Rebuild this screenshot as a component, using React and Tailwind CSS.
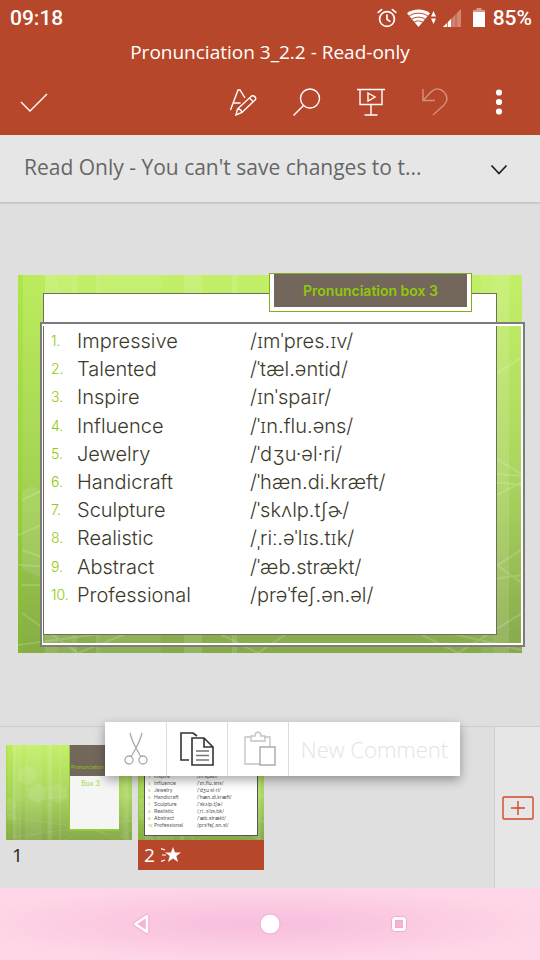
import React from "react";

const words = [
  ["Impressive", "/ɪmˈpres.ɪv/"],
  ["Talented", "/ˈtæl.əntid/"],
  ["Inspire", "/ɪnˈspaɪr/"],
  ["Influence", "/ˈɪn.flu.əns/"],
  ["Jewelry", "/ˈdʒu·əl·ri/"],
  ["Handicraft", "/ˈhæn.di.kræft/"],
  ["Sculpture", "/ˈskʌlp.tʃɚ/"],
  ["Realistic", "/ˌriː.əˈlɪs.tɪk/"],
  ["Abstract", "/ˈæb.strækt/"],
  ["Professional", "/prəˈfeʃ.ən.əl/"],
];

function StatusIcons() {
  return (
    <div className="flex items-center text-white">
      <svg className="mr-2.5 size-5" viewBox="0 0 20 20" fill="none" stroke="currentColor" strokeWidth="1.7" strokeLinecap="round" aria-hidden="true">
        <circle cx="10" cy="11" r="7.4" />
        <path d="M10 7v4.4l2.8 1.8M1.2 4.4 4.6 1.6M18.8 4.4l-3.4-2.8" />
      </svg>
      <svg className="mr-1.5 h-5 w-[30px]" viewBox="0 0 30 20" aria-hidden="true">
        <path d="M0 5.2C6 .2 17 .2 23 5.2L11.500 19Z" fill="white" />
        <path d="M2 8.200c5-4 14-4 19 0M4.500 11.400c4-3 10-3 14 0M7 14.400c2.600-2 6.400-2 9 0" fill="none" stroke="#b7472a" strokeWidth="1" />
        <path d="M24 8.500 26.500 3 29 8.500ZM24 10.500h5L26.500 16Z" fill="white" />
      </svg>
      <svg className="mr-3 h-5 w-[18px]" viewBox="0 0 18 20" aria-hidden="true">
        <path d="M0 19 18 1v18Z" fill="white" opacity=".35" />
        <path d="M0 19 8.500 10.500V19Z" fill="white" />
        <path d="M4.500 12v8M8.800 8v12M13 4v16" stroke="#b7472a" strokeWidth=".7" />
      </svg>
      <svg className="mr-2 h-5 w-3" viewBox="0 0 12 20" fill="white" aria-hidden="true">
        <path d="M3.500 0h5v2H12v3H0V2h3.500Z" opacity=".45" />
        <path d="M0 4h12v15H0Z" />
      </svg>
      <span className="font-[Roboto,sans-serif] text-[21px] leading-6 font-medium">85%</span>
    </div>
  );
}

function ToolButton({ label, dim, children }) {
  return (
    <button type="button" aria-label={label} disabled={dim} className={`flex h-16 w-16 items-center justify-center ${dim ? "text-white/40" : "text-white"}`}>
      <svg className="size-7" viewBox="0 0 28 28" fill="none" stroke="currentColor" strokeWidth="1.4" aria-hidden="true">
        {children}
      </svg>
    </button>
  );
}

function Backdrop({ children, className }) {
  return (
    <div className={`relative bg-linear-to-b from-[#c3f068] via-[#a9d45e] via-55% to-[#87a94b] ${className}`}>
      <svg className="absolute inset-0 h-full w-full" viewBox="0 0 504 378" preserveAspectRatio="none" aria-hidden="true">
        <path d="M0 0h5v378H0Z" fill="#80d000" opacity=".3" />
        <path d="M5 0h22v378H5Z" fill="#80d000" opacity=".1" />
        <g fill="white">
          <path d="M27 0h13v378H27ZM54 0h5v378h-5ZM78 0h4v378h-4ZM176 0h8v378h-8ZM214 0h5v378h-5Z" opacity=".12" />
          <path d="M40 0h14v378H40ZM82 0h61v378H82ZM463 0h12v378h-12Z" opacity=".07" />
          <path d="M475 0h16v378h-16ZM166 0h10v378h-10Z" opacity=".12" />
          <path d="M4 216 14 211 36 223V296L20 302 4 294ZM50 100 86 80 122 100V140L86 160 50 140ZM170 170 206 150 242 170V212L206 232 170 212ZM90 172 126 152 162 172V212L126 232 90 212Z" opacity=".1" />
        </g>
        <g fill="none" stroke="white" strokeWidth="2" opacity=".16">
          <path d="M4 225 36 210M4 275l40 14M4 310h40M4 338l56 40M60 378l100-40M160 338l80 40 60-40M360 338l80 40 64-40M450 117l54-35M450 165l54 35M450 196l54 5M450 235l54-28M450 310l54-36M450 270l54 38M0 260q190-85 504-50M0 290q190 10 504 85M504 300Q300 330 0 370" />
        </g>
      </svg>
      {children}
    </div>
  );
}

function MainSlide() {
  return (
    <Backdrop className="aspect-4/3 w-full">
      <div className="absolute inset-x-[25px] inset-y-[18px] border border-[#6d6d66] bg-white" />
      <div className="absolute -top-0.5 right-[50px] h-[39px] w-[203px] border border-[#7fb01c] bg-white px-1 pb-1">
        <h1 className="flex h-full items-center justify-center bg-[#72675a] font-[Inter,sans-serif] text-[14px] font-semibold text-[#8fc90a]">
          Pronunciation box 3
        </h1>
      </div>
      <div className="absolute -right-[3px] bottom-1.5 left-[22px] top-[47px] border-2 border-[#7c7c7c] font-[Inter,'Noto_Sans',sans-serif]">
        <div className="h-full border-2 border-l border-white pl-2 pt-px">
          <ol className="grid h-[282px] grid-rows-10">
            {words.map(([word, ipa], i) => (
              <li key={word} className="grid grid-cols-[26px_173px_1fr] items-center whitespace-nowrap text-[20px] font-light leading-7 text-[#3b3a2b]">
                <span className="text-[14px] text-[#8fc90a]">{i + 1}.</span>
                <span>{word}</span>
                <span>{ipa}</span>
              </li>
            ))}
          </ol>
        </div>
      </div>
    </Backdrop>
  );
}

function TitleThumb() {
  return (
    <Backdrop className="h-[95px] w-full">
      <div className="absolute right-[13px] top-0 flex h-[86px] w-[50px] flex-col border-b-2 border-l border-[#94c93a] bg-[#f5f5f5] text-center font-[Inter,sans-serif] leading-3 text-[#9bdc3a]">
        <div className="flex h-[31px] items-end justify-start bg-[#72675a] pb-[3px] pl-px text-[5px] text-[#8fc90a]">Pronunciation</div>
        <div className="pr-2 pt-0.5 text-[7px]">Box 3</div>
      </div>
    </Backdrop>
  );
}

function ListThumb() {
  return (
    <Backdrop className="h-[95px] w-full">
      <div className="absolute inset-x-1.5 bottom-1 top-1 border border-[#555] bg-white pl-[3px] pt-[9px]">
        <ol className="font-[Inter,'Noto_Sans',sans-serif]">
          {words.map(([word, ipa], i) => (
            <li key={word} className="grid grid-cols-[6px_43px_1fr] whitespace-nowrap text-[5px] leading-[7px] text-[#555]">
              <span className="text-[4px] text-[#8fc90a]">{i + 1}</span>
              <span>{word}</span>
              <span>{ipa}</span>
            </li>
          ))}
        </ol>
      </div>
    </Backdrop>
  );
}

function ContextMenu() {
  return (
    <div className="absolute -top-[5px] left-[105px] flex h-[54px] w-[355px] divide-x divide-[#ddd] bg-white shadow-[0_4px_10px_rgba(0,0,0,0.35)]">
      <button type="button" aria-label="Cut" className="flex w-[62px] items-center justify-center">
        <svg className="h-9 w-6" viewBox="0 0 24 36" fill="none" stroke="#aaa" strokeWidth="1.3" aria-hidden="true">
          <path d="M6 2c1 5 3 9 5.500 14L17 26M18 2c-1 5-3 9-5.500 14L7 26" />
          <circle cx="5" cy="29" r="4" />
          <circle cx="19" cy="29" r="4" />
        </svg>
      </button>
      <button type="button" aria-label="Copy" className="flex w-[61px] items-center justify-center">
        <svg className="size-9" viewBox="0 0 36 36" fill="none" stroke="#333" strokeWidth="1.6" aria-hidden="true">
          <path d="M10 29H2V2h12l4 3" />
          <path d="M13 7h12l9 9v18H13ZM25 7v9h9" />
          <path d="M17 20h13M17 24.500h13M17 29h13" stroke="#777" />
        </svg>
      </button>
      <button type="button" aria-label="Paste" className="flex w-[61px] items-center justify-center pl-1">
        <svg className="size-9" viewBox="0 0 36 36" fill="none" strokeWidth="1.4" aria-hidden="true">
          <path d="M9 6H3v27h15M22 6h6v10M9 10V5h4c0-5 6-5 6 0h4v5Z" stroke="#c4c4c4" />
          <path d="M18 16h15v18H18Z" stroke="#aaa" />
        </svg>
      </button>
      <button type="button" className="flex-1 whitespace-nowrap text-[22px] font-light text-[#e4e4e4]">New Comment</button>
    </div>
  );
}

export default function App() {
  return (
    <div className="flex min-h-screen flex-col bg-[#dfdfdf] font-['Open_Sans','Noto_Sans',sans-serif]">
      <header className="bg-[#b7472a] text-white">
        <div className="flex h-9 items-center justify-between pl-2.5 pr-2">
          <span className="font-[Roboto,sans-serif] text-[21px] font-medium leading-6">09:18</span>
          <StatusIcons />
        </div>
        <div className="h-8 text-center text-[19px] leading-8">Pronunciation 3_2.2 - Read-only</div>
        <nav className="flex h-[67px] items-center pl-0.5 pr-[9px]" aria-label="Document tools">
          <ToolButton label="Done">
            <path d="m1 14 9 9L27 6" />
          </ToolButton>
          <div className="ml-auto flex">
            <ToolButton label="Text formatting">
              <path d="M1.500 22 9 2h2l5 8M5 15h6.500" />
              <path d="m7 27 1.500-6L22.500 8c2.500-1 5 1.500 4 3.500L13 24.500ZM8.500 21c2 0 4 1.500 4.500 3.500M20.500 10l4 4" />
            </ToolButton>
            <ToolButton label="Search">
              <circle cx="17" cy="10.500" r="9.500" />
              <path d="M10.500 17.500.500 27.500" />
            </ToolButton>
            <ToolButton label="Present">
              <path d="M0 1.500h28M3 1.500v15h22v-15M14 16.500V27M7.500 27h13" />
              <path d="m11 5 7 4-7 4Z" />
            </ToolButton>
            <ToolButton label="Undo" dim>
              <path d="M2 1v11.500h12M2 12.500 10 4c4-4 9-4 13 0s4 9 0 13L12 27" />
            </ToolButton>
            <ToolButton label="More">
              <g fill="currentColor" stroke="none">
                <circle cx="14" cy="4.500" r="3.100" />
                <circle cx="14" cy="14" r="3.100" />
                <circle cx="14" cy="23.500" r="3.100" />
              </g>
            </ToolButton>
          </div>
        </nav>
      </header>

      <div className="relative flex h-[67px] items-center justify-between bg-[#e6e6e6] pb-1 pl-6 pr-8 text-[#666] shadow-[0_1px_2px_rgba(0,0,0,0.2)]">
        <p className="whitespace-nowrap text-[21px] leading-8">Read Only - You can't save changes to t...</p>
        <button type="button" aria-label="Expand message" className="pt-1">
          <svg className="h-4 w-[18px]" viewBox="0 0 18 16" fill="none" stroke="#222" strokeWidth="1.800" aria-hidden="true">
            <path d="m1.500 4.500 7.500 8 7.500-8" />
          </svg>
        </button>
      </div>

      <main className="flex flex-1 flex-col justify-center px-[18px]">
        <MainSlide />
      </main>

      <section className="relative flex h-[162px] border-t border-[#cecece]" aria-label="Slides">
        <div className="flex flex-1 gap-1.5 pl-1.5 pt-[18px]">
          <div className="w-[126px]">
            <TitleThumb />
            <div className="px-1.5 text-[19px] leading-[30px] text-[#222]">1</div>
          </div>
          <div className="w-[126px]">
            <ListThumb />
            <div className="flex h-[30px] items-center gap-1.5 bg-[#b7472a] px-1.5 text-[19px] leading-[30px] text-white">
              2
              <svg className="h-4 w-5" viewBox="0 0 20 16" aria-hidden="true">
                <path d="m12 0 2 5.500h6l-4.700 3.600L17 15l-5-3.500L7 15l1.700-5.900L4 5.500h6Z" fill="white" />
                <path d="M0 1.500 4 3M1 8h4M0 14.500 4 13" stroke="white" strokeWidth="1.200" />
              </svg>
            </div>
          </div>
        </div>
        <div className="flex w-[46px] items-center justify-center border-l border-[#cecece] bg-[#e6e6e6]">
          <button type="button" aria-label="New slide">
            <svg className="h-6 w-8" viewBox="0 0 32 24" fill="none" stroke="#d24726" strokeWidth="1.400" aria-hidden="true">
              <rect x="1" y="1" width="30" height="22" rx="1" />
              <path d="M16 5v14M9 12h14" />
            </svg>
          </button>
        </div>
        <ContextMenu />
      </section>

      <nav className="flex h-[72px] items-center justify-center gap-[101px] bg-[radial-gradient(ellipse_at_48%_50%,#f8bfdc_0%,#f9c3df_18%,#fccce2_45%,#fed6e7_72%)]" aria-label="System">
        <button type="button" aria-label="Back">
          <svg className="size-7" viewBox="0 0 28 28" strokeLinejoin="round" aria-hidden="true">
            <path d="M20 6v16L8 14Z" fill="none" stroke="#f7a8cc" strokeWidth="4.500" />
            <path d="M20 6v16L8 14Z" fill="#f5b5d2" stroke="white" strokeWidth="2.500" />
          </svg>
        </button>
        <button type="button" aria-label="Home">
          <svg className="size-7" viewBox="0 0 28 28" aria-hidden="true">
            <circle cx="14" cy="14" r="10" fill="white" stroke="#f7a8cc" />
          </svg>
        </button>
        <button type="button" aria-label="Recent apps">
          <svg className="size-7" viewBox="0 0 28 28" aria-hidden="true">
            <rect x="6.500" y="6.500" width="15" height="15" rx="3.500" fill="white" stroke="#f7a8cc" />
            <rect x="10.500" y="10.500" width="7" height="7" fill="#f5b5d2" stroke="#f7a8cc" />
          </svg>
        </button>
      </nav>
    </div>
  );
}
